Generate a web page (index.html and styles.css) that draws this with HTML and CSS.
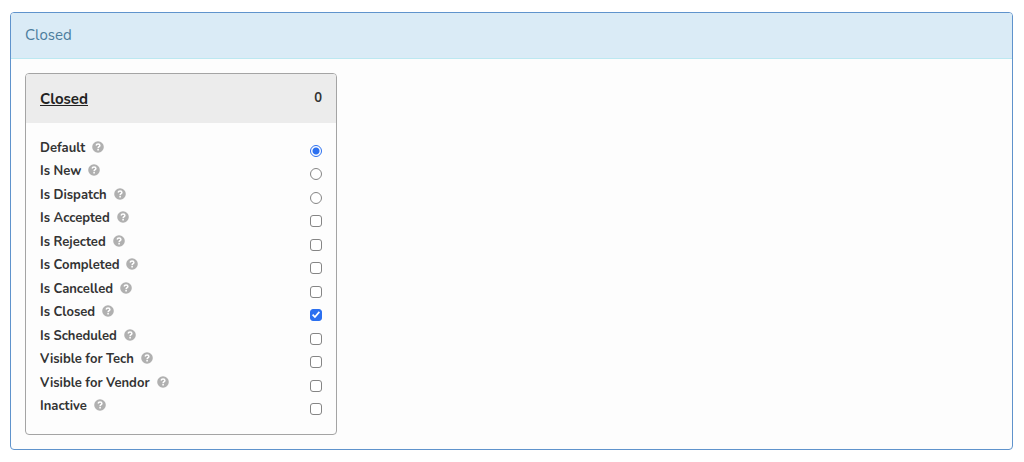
FILE: index.html
```
<!DOCTYPE html>
<html lang="en">
<head>
<meta charset="utf-8">
<meta name="viewport" content="width=device-width, initial-scale=1">
<title>Closed</title>
<link rel="stylesheet" href="styles.css">
</head>
<body>
<svg class="sprite" aria-hidden="true">
  <symbol id="help" viewBox="0 0 12 12">
    <circle cx="6" cy="6" r="5.8" fill="#b0b0b0"/>
    <path d="M4.1 4.5C4.3 3.4 5.1 2.9 6.1 2.9C7.2 2.9 7.9 3.6 7.9 4.4C7.9 5.6 6.1 5.7 6.1 7.2" fill="none" stroke="#fff" stroke-width="1.5"/>
    <rect x="5.3" y="8" width="1.6" height="1.5" fill="#fff"/>
  </symbol>
</svg>
<section class="panel">
  <h1 class="panel-heading">Closed</h1>
  <div class="panel-body">
    <article class="card">
      <header class="card-header">
        <a class="card-title" href="#">Closed</a>
        <span class="card-count">0</span>
      </header>
      <div class="options">
        <div class="option"><label class="option-label" for="default">Default</label><svg class="help"><use href="#help"/></svg><input class="control radio" type="radio" name="kind" id="default" checked></div>
        <div class="option"><label class="option-label" for="new">Is New</label><svg class="help"><use href="#help"/></svg><input class="control radio" type="radio" name="kind" id="new"></div>
        <div class="option"><label class="option-label" for="dispatch">Is Dispatch</label><svg class="help"><use href="#help"/></svg><input class="control radio" type="radio" name="kind" id="dispatch"></div>
        <div class="option"><label class="option-label" for="accepted">Is Accepted</label><svg class="help"><use href="#help"/></svg><input class="control" type="checkbox" id="accepted"></div>
        <div class="option"><label class="option-label" for="rejected">Is Rejected</label><svg class="help"><use href="#help"/></svg><input class="control" type="checkbox" id="rejected"></div>
        <div class="option"><label class="option-label" for="completed">Is Completed</label><svg class="help"><use href="#help"/></svg><input class="control" type="checkbox" id="completed"></div>
        <div class="option"><label class="option-label" for="cancelled">Is Cancelled</label><svg class="help"><use href="#help"/></svg><input class="control" type="checkbox" id="cancelled"></div>
        <div class="option"><label class="option-label" for="closed">Is Closed</label><svg class="help"><use href="#help"/></svg><input class="control" type="checkbox" id="closed" checked></div>
        <div class="option"><label class="option-label" for="scheduled">Is Scheduled</label><svg class="help"><use href="#help"/></svg><input class="control" type="checkbox" id="scheduled"></div>
        <div class="option"><label class="option-label" for="tech">Visible for Tech</label><svg class="help"><use href="#help"/></svg><input class="control" type="checkbox" id="tech"></div>
        <div class="option"><label class="option-label" for="vendor">Visible for Vendor</label><svg class="help"><use href="#help"/></svg><input class="control" type="checkbox" id="vendor"></div>
        <div class="option"><label class="option-label" for="inactive">Inactive</label><svg class="help"><use href="#help"/></svg><input class="control" type="checkbox" id="inactive"></div>
      </div>
    </article>
  </div>
</section>
</body>
</html>
```
FILE: styles.css
```
* { box-sizing: border-box; }
body {
  margin: 12px 11px 12px 10px;
  background: #fff;
  color: #333;
  font-family: Nunito, Lato, sans-serif;
  font-size: 13px;
  line-height: 20px;
}
.sprite { display: none; }
.panel {
  border: 1px solid #5f93cc;
  border-radius: 4px;
  background: #fdfdfd;
  overflow: hidden;
}
.panel-heading {
  margin: 0;
  padding: 12px 14px 13px;
  border-bottom: 1px solid #bce8f1;
  background: #daebf6;
  color: #4c7d9d;
  font-size: 15px;
  font-weight: 400;
  line-height: 20px;
}
.panel-body { padding: 14px; }
.card {
  width: 312px;
  max-width: 100%;
  border: 1px solid #a4a4a4;
  border-radius: 4px;
  overflow: hidden;
}
.card-header {
  display: flex;
  justify-content: space-between;
  align-items: flex-start;
  padding: 14px 14px 12px;
  background: #ececec;
  font-weight: 700;
}
.card-title {
  color: #222;
  font-size: 15px;
  line-height: 23px;
}
.options {
  display: grid;
  grid-template-rows: repeat(6, 23px 24px);
  padding: 15px 14px 14px;
}
.option {
  display: flex;
  align-items: flex-start;
}
.option-label { font-weight: 700; }
.help {
  width: 12px;
  height: 12px;
  margin: 3px 0 0 7px;
}
.control {
  appearance: none;
  width: 12px;
  height: 12px;
  margin: 7px 0 0 auto;
  border: 1px solid #858585;
  border-radius: 3px;
  background: #fff;
}
.control:checked {
  border-color: #2c70f0;
  background: #2c70f0;
}
.control[type="checkbox"]:checked {
  display: grid;
  place-items: center;
}
.control[type="checkbox"]:checked::before {
  content: "";
  width: 8px;
  height: 8px;
  background: #fff;
  clip-path: polygon(0 52%, 15% 38%, 36% 60%, 84% 4%, 100% 18%, 37% 92%);
}
.control[type="radio"] { border-radius: 50%; }
.control[type="radio"]:checked {
  background: radial-gradient(circle, #2c70f0 3px, #fff 4px);
}
```
